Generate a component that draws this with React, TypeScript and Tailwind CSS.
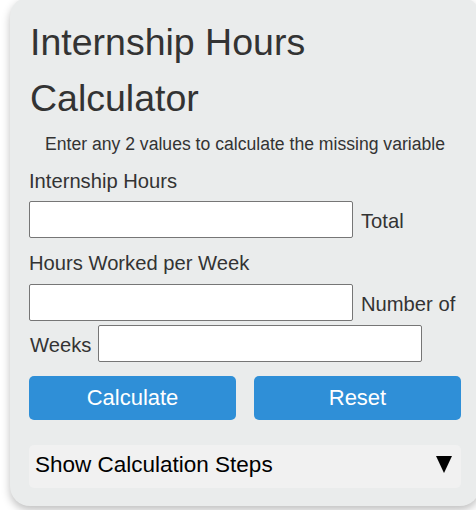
import React from "react";

export default function App() {
  const font = { fontFamily: '"Liberation Sans", Arial, sans-serif' };
  return (
    <div className="bg-white w-[476px] h-[510px] overflow-hidden" style={font}>
      <div className="ml-[10px] mt-[-3px] w-[470px] rounded-[20px] bg-[#eaecec] pl-[19px] pr-[19px] pt-[18px] pb-[18px] shadow-[0_4px_8px_rgba(0,0,0,0.25)]">
        <h1 className="text-[37.5px] leading-[55.7px] text-[#333] font-normal ml-[1px]">
          Internship Hours Calculator
        </h1>
        <p className="mt-[8px] text-center text-[17.6px] leading-[20.2px] text-[#333]">
          Enter any 2 values to calculate the missing variable
        </p>
        <div className="mt-[15px] text-[20.2px] leading-[22.75px] text-[#333]">
          Internship Hours
        </div>
        <div className="mt-[9px] flex items-center gap-[8px]">
          <input className="w-[324px] h-[37px] bg-white border border-[#767676] rounded-[2px]" />
          <span className="pt-[4px] text-[20.2px] leading-[22.75px] text-[#333]">Total</span>
        </div>
        <div className="mt-[14px] text-[20.2px] leading-[22.75px] text-[#333]">
          Hours Worked per Week
        </div>
        <div className="mt-[9px] flex items-center gap-[8px]">
          <input className="w-[324px] h-[37px] bg-white border border-[#767676] rounded-[2px]" />
          <span className="pt-[4px] text-[20.2px] leading-[22.75px] text-[#333]">Number of</span>
        </div>
        <div className="mt-[4px] flex items-center gap-[7px]">
          <span className="pt-[4px] text-[20.2px] leading-[22.75px] text-[#333] ml-[1px]">Weeks</span>
          <input className="w-[324px] h-[37px] bg-white border border-[#767676] rounded-[2px]" />
        </div>
        <div className="mt-[14px] grid grid-cols-2 gap-[18px]">
          <button className="h-[44px] rounded-[5px] bg-[#2f8fd7] text-white text-[22px] leading-[25.3px]">
            Calculate
          </button>
          <button className="h-[44px] rounded-[5px] bg-[#2f8fd7] text-white text-[22px] leading-[25.3px]">
            Reset
          </button>
        </div>
        <div className="mt-[25px] h-[43px] rounded-[5px] bg-[#f1f1f1] flex items-center justify-between pl-[6px] pr-[9px]">
          <span className="mb-[4px] text-[22.5px] leading-[25.8px] text-black">Show Calculation Steps</span>
          <svg width="16" height="17" viewBox="0 0 16 17" className="mb-[4px]">
            <polygon points="0,0 16,0 8,17" fill="#000" />
          </svg>
        </div>
      </div>
    </div>
  );
}
